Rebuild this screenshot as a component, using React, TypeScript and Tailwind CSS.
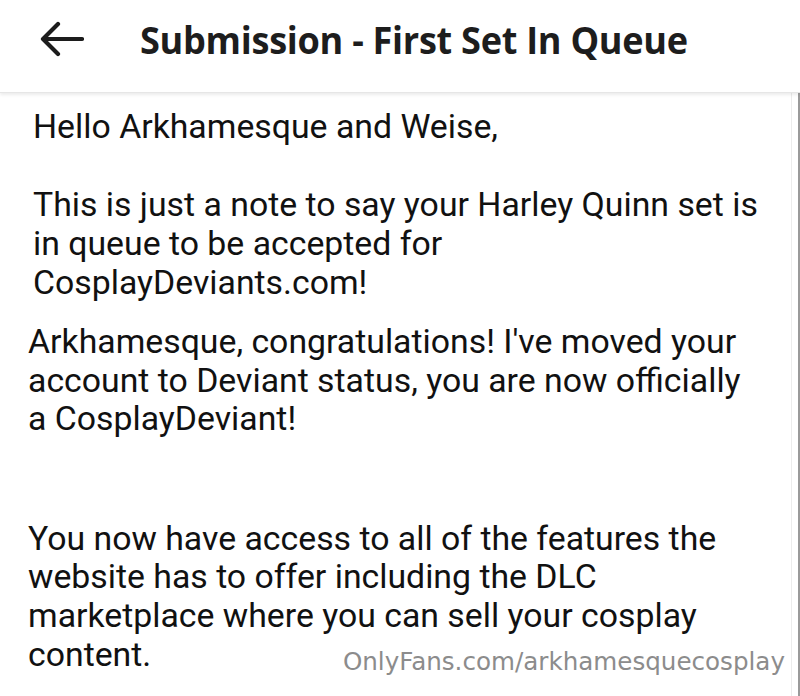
import React from "react";

export default function App() {
  return (
    <div className="relative w-[800px] h-[696px] overflow-hidden bg-white">
      <div className="relative z-10 h-[93px] bg-white flex items-center shadow-[0_2px_3px_rgba(0,0,0,0.08)] border-b border-[#e6e6e6]">
        <svg className="ml-[38px] -mt-[14px]" width="46" height="36" viewBox="0 0 46 36" fill="none">
          <path d="M44 18H6M20 3L5 18l15 15" stroke="#1c1c1c" strokeWidth="4.2" strokeLinecap="round" strokeLinejoin="round" />
        </svg>
        <span
          className="ml-[56px] -mt-[14px] inline-block origin-left scale-x-[0.95] whitespace-nowrap text-[38px] font-bold text-[#1d1d1d] tracking-[-0.3px]"
          style={{ fontFamily: '"Open Sans", "Noto Sans", sans-serif' }}
        >
          Submission - First Set In Queue
        </span>
      </div>
      <div className="text-[33.8px] text-[#111] whitespace-nowrap" style={{ fontFamily: 'Roboto, "Noto Sans", sans-serif' }}>
        <div className="pl-[33px] pt-[14px] leading-[39px]">
          Hello Arkhamesque and Weise,
          <br />
          <br />
          This is just a note to say your Harley Quinn set is
          <br />
          in queue to be accepted for
          <br />
          CosplayDeviants.com!
        </div>
        <div className="pl-[28px] mt-[21px] leading-[38.5px]">
          Arkhamesque, congratulations! I've moved your
          <br />
          account to Deviant status, you are now officially
          <br />
          a CosplayDeviant!
        </div>
        <div className="pl-[28px] mt-[81px] leading-[38.8px]">
          You now have access to all of the features the
          <br />
          website has to offer including the DLC
          <br />
          marketplace where you can sell your cosplay
          <br />
          content.
        </div>
      </div>
      <div
        className="absolute right-[15px] top-[647px] text-[24.6px] leading-[30px] text-[#8c8c8c] whitespace-nowrap"
        style={{ fontFamily: '"DejaVu Sans", sans-serif' }}
      >
        OnlyFans.com/arkhamesquecosplay
      </div>
      <div className="absolute right-[8px] top-0 h-full w-px bg-[#ececec]" />
      <div className="absolute right-0 top-0 h-full w-[2px] bg-[#9a9a9a]" />
    </div>
  );
}
